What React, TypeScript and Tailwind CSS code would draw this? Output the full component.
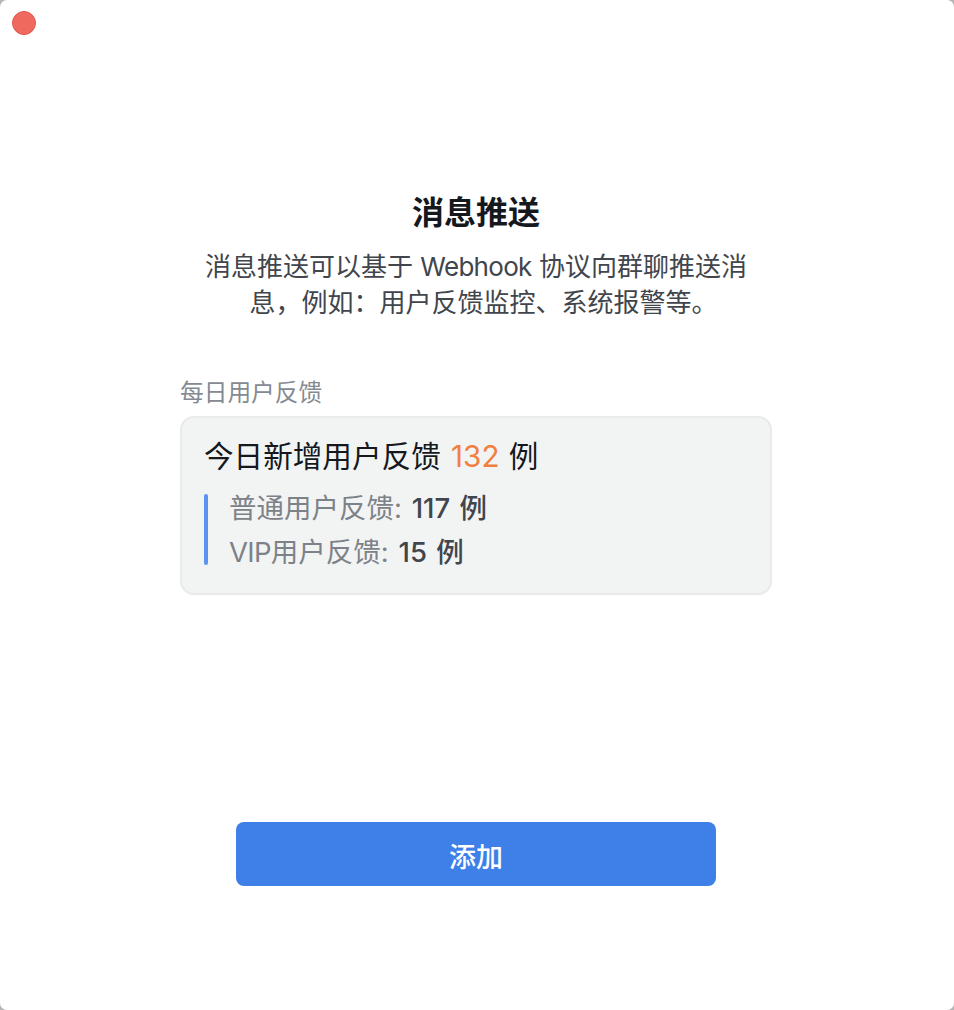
const font = {
  fontFamily: '"Inter", "Liberation Sans", "Noto Sans CJK SC", sans-serif',
}

export default function App() {
  return (
    <div className="h-[1010px] w-[954px] bg-[#b5b5b5]" style={font}>
      <div className="relative flex h-full w-full flex-col items-center overflow-hidden rounded-[7px] bg-white pr-[2px]">
        <div className="absolute left-3 top-[11px] h-6 w-6 rounded-full border border-[#e0574f] bg-[#f0695f]" />

        <h1 className="mt-[192px] text-[32px] leading-[42px] font-bold text-[#15181d]">消息推送</h1>
        <p className="mt-[15px] w-[560px] text-center text-[26px] leading-[36px] text-[#41454c]">
          消息推送可以基于 <span className="tracking-[-0.7px]">Webhook</span> 协议向群聊推送消息，例如：用户反馈监控、系统报警等
          <span className="-mr-[15px]">。</span>
        </p>

        <div className="mt-[56px] w-[592px]">
          <p className="text-[23.7px] leading-[32px] text-[#858a92]">每日用户反馈</p>
          <div className="mt-[7px] h-[179px] rounded-[14px] border-2 border-[#e8eaeb] bg-[#f2f4f4] pl-[22px] pt-[18px]">
            <p className="text-[29.6px] leading-[40px] text-[#15181d]">
              今日新增用户反馈 <span className="ml-[2px] mr-[1px] text-[#f0803f]">132</span> 例
            </p>
            <div className="mt-[18px] flex h-[71px] gap-[21px]">
              <div className="w-1 rounded-full bg-[#5b94f0]" />
              <div className="flex flex-col gap-4 text-[27.5px] leading-[28px] text-[#7d8188]">
                <p>
                  普通用户反馈:{' '}
                  <span className="ml-[2px] font-medium text-[#41454c] [word-spacing:2px]">117 例</span>
                </p>
                <p>
                  <span className="tracking-[-0.7px]">VIP</span>用户反馈:{' '}
                  <span className="ml-[2px] font-medium text-[#41454c] [word-spacing:2px]">15 例</span>
                </p>
              </div>
            </div>
          </div>
        </div>

        <button className="mt-[227px] h-[64px] w-[480px] rounded-[8px] bg-[#3e80e8] pt-2 text-[27px] font-medium text-white">
          添加
        </button>
      </div>
    </div>
  )
}
